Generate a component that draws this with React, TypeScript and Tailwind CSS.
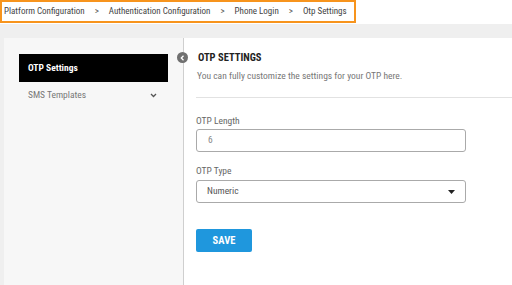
import React from "react";

const font = { fontFamily: '"Liberation Sans Narrow", "Roboto Condensed", "DejaVu Sans Condensed", Roboto, sans-serif' };

export default function App() {
  const crumbs = ["Platform Configuration", "Authentication Configuration", "Phone Login", "Otp Settings"];
  return (
    <div className="w-[512px] h-[285px] bg-[#efefef] flex flex-col overflow-hidden" style={font}>
      <div className="h-[24px] bg-white shrink-0">
        <div className="w-[356px] h-[23px] border-2 border-[#f7941d] flex items-center pl-[2px] text-[9px] text-[#444] whitespace-nowrap">
          {crumbs.map((c, i) => (
            <React.Fragment key={c}>
              {i > 0 && <span className="mx-[10px] text-[#555]">&gt;</span>}
              <span className="whitespace-nowrap">{c}</span>
            </React.Fragment>
          ))}
        </div>
      </div>
      <div className="h-[14px] shrink-0" />
      <div className="flex flex-1 pl-[4px]">
        <div className="w-[180px] bg-[#f7f7f7] border-r border-[#cfcfcf] pt-[16px] px-[15px]">
          <div className="h-[28px] w-[149px] bg-black text-white text-[9.5px] font-bold flex items-center pl-[9px]">OTP Settings</div>
          <div className="h-[27px] flex items-center justify-between pl-[9px] pr-[11px] text-[9.5px] text-[#777]">
            <span>SMS Templates</span>
            <svg width="7" height="5" viewBox="0 0 7 5"><path d="M1 1 L3.5 3.5 L6 1" stroke="#555" strokeWidth="1.3" fill="none" /></svg>
          </div>
        </div>
        <div className="relative flex-1 bg-white pl-[12px] pr-[46px] pt-[14px]">
          <div className="absolute left-[-7px] top-[14px] w-[11px] h-[11px] rounded-full bg-[#707070] flex items-center justify-center">
            <svg width="5" height="6" viewBox="0 0 5 6"><path d="M3.5 0.8 L1.3 3 L3.5 5.2" stroke="white" strokeWidth="1.3" fill="none" /></svg>
          </div>
          <div className="text-[10.5px] font-bold text-[#222] leading-[12px] pl-[2px]">OTP SETTINGS</div>
          <div className="text-[9.5px] text-[#777] mt-[6px] leading-[11px] pl-[1px]">You can fully customize the settings for your OTP here.</div>
          <div className="border-t border-[#e2e2e2] mt-[16px] -mr-[46px]" />
          <div className="text-[9.5px] text-[#666] mt-[17px] leading-[11px]">OTP Length</div>
          <div className="mt-[3px] h-[23px] w-[270px] border border-[#aaa] rounded-[3px] flex items-center pl-[11px] text-[9.5px] text-[#888]">6</div>
          <div className="text-[9.5px] text-[#666] mt-[13px] leading-[11px]">OTP Type</div>
          <div className="mt-[4px] h-[23px] w-[270px] border border-[#aaa] rounded-[3px] flex items-center justify-between pl-[10px] pr-[10px] text-[9.5px] text-[#555]">
            <span>Numeric</span>
            <svg width="7" height="4" viewBox="0 0 7 4"><path d="M0 0 L7 0 L3.5 4 Z" fill="#222" /></svg>
          </div>
          <div className="mt-[26px] h-[23px] w-[56px] rounded-[2px] bg-[#1f97dd] text-white text-[10.5px] font-bold flex items-center justify-center">SAVE</div>
        </div>
      </div>
    </div>
  );
}
